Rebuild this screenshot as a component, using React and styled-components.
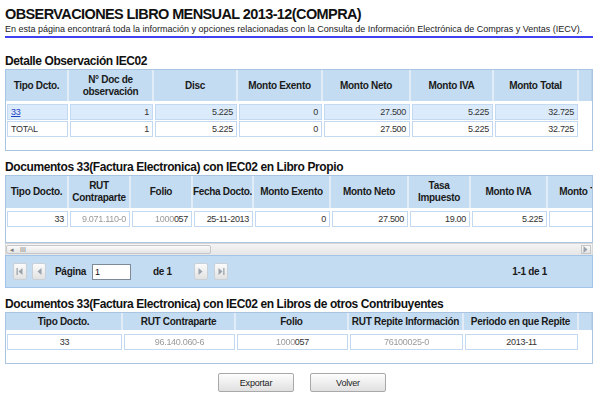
import React from "react";
import styled, { createGlobalStyle } from "styled-components";

const GlobalStyle = createGlobalStyle`
  html, body {
    margin: 0;
    padding: 0;
    background: #fff;
  }
  body {
    font-family: "Liberation Sans", Arial, sans-serif;
    color: #222;
  }
`;

const detalleCols = [63, 85, 84, 85, 88, 83, 85];
const propioCols = [63, 62, 62, 61, 77, 78, 62, 77, 77];
const otrosCols = [117, 113, 113, 115, 115];

const Page = styled.div`
  width: 588px;
  padding: 5px 7px 0 5px;
`;

const Title = styled.h1`
  margin: 0;
  font-size: 14.5px;
  line-height: 18px;
  letter-spacing: -0.6px;
  font-weight: bold;
  color: #111;
`;

const Subtitle = styled.p`
  margin: 0;
  font-size: 9px;
  line-height: 12px;
  color: #222;
  white-space: nowrap;
`;

const Rule = styled.div`
  height: 2px;
  background: #4040ee;
  margin-top: 1px;
`;

const SectionTitle = styled.h2`
  margin: ${(p) => p.$top || 16}px 0 1px;
  font-size: 12px;
  line-height: 14px;
  letter-spacing: -0.4px;
  font-weight: bold;
  color: #111;
`;

const GridBox = styled.div`
  border: 1px solid #aac5e2;
  height: ${(p) => p.$height}px;
  overflow: hidden;
  background: #fff;
  box-sizing: border-box;
`;

const Inner = styled.div`
  width: max-content;
`;

const HeaderRow = styled.div`
  display: grid;
  grid-template-columns: ${(p) => p.$cols};
  height: ${(p) => p.$height}px;
  background: #c4dcf2;
`;

const HeaderCell = styled.div`
  display: flex;
  align-items: center;
  justify-content: center;
  text-align: center;
  font-size: 10px;
  line-height: 12px;
  letter-spacing: -0.3px;
  font-weight: bold;
  color: #1a1a1a;
  border-right: 2px solid #e2ecf7;
  white-space: nowrap;
  overflow: hidden;
`;

const Filler = styled.div`
  background: #c4dcf2;
  border-right: 1px solid #b9d0e8;
`;

const Body = styled.div`
  padding-top: ${(p) => p.$pad || 3}px;
  display: flex;
  flex-direction: column;
  gap: 1px;
`;

const Row = styled.div`
  display: grid;
  grid-template-columns: ${(p) => p.$cols};
  height: 16px;
`;

const Cell = styled.div`
  margin: 0 1px;
  border: 1px solid #c3d9f1;
  background: ${(p) => (p.$alt ? "#dcebfc" : "#fff")};
  font-size: 9px;
  line-height: 14px;
  letter-spacing: -0.3px;
  color: #333;
  padding: 0 3px;
  text-align: ${(p) => p.$align || "right"};
  white-space: nowrap;
  overflow: hidden;
`;

const Link = styled.a`
  color: #1a3fc0;
  text-decoration: underline;
`;

const Blur = styled.span`
  color: #9a9a9a;
  filter: blur(0.7px);
`;

const ScrollBar = styled.div`
  height: 11px;
  display: flex;
  align-items: center;
  background: linear-gradient(#f4f4f4, #e6e6e6);
  border: 1px solid #d8d8d8;
  border-bottom: none;
`;

const Thumb = styled.div`
  width: 205px;
  height: 9px;
  border: 1px solid #c6c6c6;
  border-radius: 2px;
  background: linear-gradient(#fbfbfb, #e4e4e4);
  display: flex;
  align-items: center;
  gap: 6px;
  padding-left: 3px;
  box-sizing: border-box;
  font-size: 7px;
  line-height: 7px;
  color: #777;
`;

const ScrollArrow = styled.div`
  margin-left: auto;
  margin-right: 1px;
  width: 10px;
  height: 9px;
  border: 1px solid #c6c6c6;
  background: linear-gradient(#fbfbfb, #e4e4e4);
  box-sizing: border-box;
  display: flex;
  align-items: center;
  justify-content: center;
`;

const Pager = styled.div`
  height: 33px;
  box-sizing: border-box;
  border: 1px solid #a2c4e8;
  background: #c4dcf2;
  display: flex;
  align-items: center;
  padding: 0 45px 0 7px;
  font-size: 10px;
  letter-spacing: -0.3px;
  font-weight: bold;
  color: #1a1a1a;
`;

const PagerButton = styled.div`
  width: 14px;
  height: 17px;
  box-sizing: border-box;
  border: 1px solid #c8d0d8;
  border-radius: 2px;
  background: linear-gradient(#fbfbfb, #e2e2e2);
  display: flex;
  align-items: center;
  justify-content: center;
  margin-left: ${(p) => p.$gap || 0}px;
`;

const PagerLabel = styled.span`
  margin-left: ${(p) => p.$gap || 0}px;
`;

const PageInput = styled.div`
  width: 39px;
  height: 16px;
  box-sizing: border-box;
  margin-left: 6px;
  border: 1px solid #7d8a98;
  background: #fff;
  font-size: 9px;
  font-weight: normal;
  line-height: 14px;
  padding-left: 2px;
  color: #111;
`;

const PagerCount = styled.span`
  margin-left: auto;
`;

const Actions = styled.div`
  display: flex;
  justify-content: center;
  gap: 16px;
  margin-top: 9px;
  padding-left: 6px;
`;

const Button = styled.button`
  width: 76px;
  height: 19px;
  border: 1px solid #a9a9a9;
  border-radius: 2px;
  background: linear-gradient(#fdfdfd, #e0e0e0);
  font-family: "Liberation Sans", Arial, sans-serif;
  font-size: 9px;
  letter-spacing: -0.2px;
  color: #222;
  padding: 0;
`;

const Arrow = ({ dir, bar }) => (
  <svg width="8" height="9" viewBox="0 0 8 9">
    {dir === "left" ? (
      <>
        {bar && <rect x="0.5" y="1" width="1.3" height="7" fill="#9aa3ad" />}
        <polygon points="6.5,1 2.5,4.5 6.5,8" fill="#9aa3ad" />
      </>
    ) : (
      <>
        <polygon points="1.5,1 5.5,4.5 1.5,8" fill="#9aa3ad" />
        {bar && <rect x="6.2" y="1" width="1.3" height="7" fill="#9aa3ad" />}
      </>
    )}
  </svg>
);

const px = (cols) => cols.map((c) => `${c}px`).join(" ");

const Header = ({ cols, labels, height, filler }) => (
  <HeaderRow $cols={px(cols) + (filler ? " 1fr" : "")} $height={height}>
    {labels.map((l, i) => (
      <HeaderCell key={i}>{l}</HeaderCell>
    ))}
    {filler && <Filler />}
  </HeaderRow>
);

export default function App() {
  return (
    <>
      <GlobalStyle />
      <Page>
        <Title>OBSERVACIONES LIBRO MENSUAL 2013-12(COMPRA)</Title>
        <Subtitle>
          En esta página encontrará toda la información y opciones relacionadas con la Consulta de
          Información Electrónica de Compras y Ventas (IECV).
        </Subtitle>
        <Rule />

        <SectionTitle $top={16}>Detalle Observación IEC02</SectionTitle>
        <GridBox $height={82}>
          <Header
            cols={detalleCols}
            height={31}
            filler
            labels={[
              "Tipo Dcto.",
              <>N° Doc de<br />observación</>,
              "Disc",
              "Monto Exento",
              "Monto Neto",
              "Monto IVA",
              "Monto Total",
            ]}
          />
          <Body>
            <Row $cols={px(detalleCols)}>
              <Cell $alt $align="left"><Link href="#">33</Link></Cell>
              <Cell $alt>1</Cell>
              <Cell $alt>5.225</Cell>
              <Cell $alt>0</Cell>
              <Cell $alt>27.500</Cell>
              <Cell $alt>5.225</Cell>
              <Cell $alt>32.725</Cell>
            </Row>
            <Row $cols={px(detalleCols)}>
              <Cell $align="left">TOTAL</Cell>
              <Cell>1</Cell>
              <Cell>5.225</Cell>
              <Cell>0</Cell>
              <Cell>27.500</Cell>
              <Cell>5.225</Cell>
              <Cell>32.725</Cell>
            </Row>
          </Body>
        </GridBox>

        <SectionTitle $top={9}>Documentos 33(Factura Electronica) con IEC02 en Libro Propio</SectionTitle>
        <GridBox $height={68}>
          <Inner>
            <Header
              cols={propioCols}
              height={32}
              labels={[
                "Tipo Docto.",
                <>RUT<br />Contraparte</>,
                "Folio",
                "Fecha Docto.",
                "Monto Exento",
                "Monto Neto",
                <>Tasa<br />Impuesto</>,
                "Monto IVA",
                "Monto Total",
              ]}
            />
            <Body>
              <Row $cols={px(propioCols)}>
                <Cell>33</Cell>
                <Cell><Blur>9.071.110-0</Blur></Cell>
                <Cell><Blur>1000</Blur>057</Cell>
                <Cell>25-11-2013</Cell>
                <Cell>0</Cell>
                <Cell>27.500</Cell>
                <Cell>19.00</Cell>
                <Cell>5.225</Cell>
                <Cell>32.725</Cell>
              </Row>
            </Body>
          </Inner>
        </GridBox>
        <ScrollBar>
          <Thumb>
            <span>◂</span>
            <span>III</span>
          </Thumb>
          <ScrollArrow>
            <Arrow dir="right" />
          </ScrollArrow>
        </ScrollBar>
        <Pager>
          <PagerButton><Arrow dir="left" bar /></PagerButton>
          <PagerButton $gap={5}><Arrow dir="left" /></PagerButton>
          <PagerLabel $gap={9}>Página</PagerLabel>
          <PageInput>1</PageInput>
          <PagerLabel $gap={22}>de 1</PagerLabel>
          <PagerButton $gap={22}><Arrow dir="right" /></PagerButton>
          <PagerButton $gap={6}><Arrow dir="right" bar /></PagerButton>
          <PagerCount>1-1 de 1</PagerCount>
        </Pager>

        <SectionTitle $top={9}>Documentos 33(Factura Electronica) con IEC02 en Libros de otros Contribuyentes</SectionTitle>
        <GridBox $height={52}>
          <Header
            cols={otrosCols}
            height={17}
            filler
            labels={[
              "Tipo Docto.",
              "RUT Contraparte",
              "Folio",
              "RUT Repite Información",
              "Periodo en que Repite",
            ]}
          />
          <Body $pad={4}>
            <Row $cols={px(otrosCols)}>
              <Cell $align="center">33</Cell>
              <Cell $align="center"><Blur>96.140.060-6</Blur></Cell>
              <Cell $align="center"><Blur>1000</Blur>057</Cell>
              <Cell $align="center"><Blur>76100025-0</Blur></Cell>
              <Cell $align="center">2013-11</Cell>
            </Row>
          </Body>
        </GridBox>

        <Actions>
          <Button>Exportar</Button>
          <Button>Volver</Button>
        </Actions>
      </Page>
    </>
  );
}
